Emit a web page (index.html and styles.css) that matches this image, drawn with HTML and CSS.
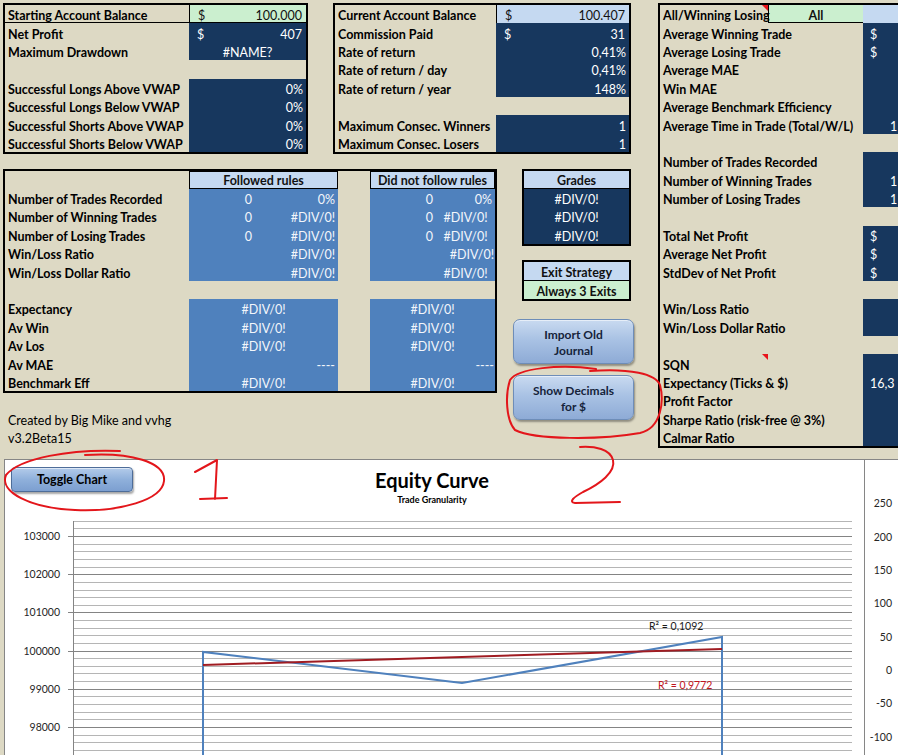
FILE: index.html
```html
<!DOCTYPE html>
<html>
<head>
<meta charset="utf-8">
<title>Trading Journal Dashboard</title>
<link rel="stylesheet" href="styles.css">
</head>
<body>
<div class="page">
  <div class="sheet">
    <section class="box summary">
      <div class="c lbl first">Starting Account Balance</div>
      <div class="c gr money first edge"><span>$</span><span>100.000</span></div>
      <div class="c lbl">Net Profit</div>
      <div class="c dk money"><span>$</span><span>407</span></div>
      <div class="c lbl">Maximum Drawdown</div>
      <div class="c dk ctr">#NAME?</div>
      <div class="c full"></div>
      <div class="c lbl">Successful Longs Above VWAP</div>
      <div class="c dk r">0%</div>
      <div class="c lbl">Successful Longs Below VWAP</div>
      <div class="c dk r">0%</div>
      <div class="c lbl">Successful Shorts Above VWAP</div>
      <div class="c dk r">0%</div>
      <div class="c lbl">Successful Shorts Below VWAP</div>
      <div class="c dk r">0%</div>
    </section>

    <section class="box account">
      <div class="c lbl">Current Account Balance</div>
      <div class="c lt money edge"><span>$</span><span>100.407</span></div>
      <div class="c lbl">Commission Paid</div>
      <div class="c dk money"><span>$</span><span>31</span></div>
      <div class="c lbl">Rate of return</div>
      <div class="c dk r">0,41%</div>
      <div class="c lbl">Rate of return / day</div>
      <div class="c dk r">0,41%</div>
      <div class="c lbl">Rate of return / year</div>
      <div class="c dk r">148%</div>
      <div class="c full"></div>
      <div class="c lbl">Maximum Consec. Winners</div>
      <div class="c dk r">1</div>
      <div class="c lbl">Maximum Consec. Losers</div>
      <div class="c dk r">1</div>
    </section>

    <section class="box stats">
      <div class="c lbl note">All/Winning Losing</div>
      <div class="c gr lbl ctr sel">All</div>
      <div class="c lt"></div>
      <div class="c lbl span2">Average Winning Trade</div>
      <div class="c dk sv">$</div>
      <div class="c lbl span2">Average Losing Trade</div>
      <div class="c dk sv">$</div>
      <div class="c lbl span2">Average MAE</div>
      <div class="c dk"></div>
      <div class="c lbl span2">Win MAE</div>
      <div class="c dk"></div>
      <div class="c lbl span2">Average Benchmark Efficiency</div>
      <div class="c dk"></div>
      <div class="c lbl span2">Average Time in Trade (Total/W/L)</div>
      <div class="c dk near">1</div>
      <div class="c full"></div>
      <div class="c lbl span2">Number of Trades Recorded</div>
      <div class="c dk"></div>
      <div class="c lbl span2">Number of Winning Trades</div>
      <div class="c dk near">1</div>
      <div class="c lbl span2">Number of Losing Trades</div>
      <div class="c dk near">1</div>
      <div class="c full"></div>
      <div class="c lbl span2">Total Net Profit</div>
      <div class="c dk sv">$</div>
      <div class="c lbl span2">Average Net Profit</div>
      <div class="c dk sv">$</div>
      <div class="c lbl span2">StdDev of Net Profit</div>
      <div class="c dk sv">$</div>
      <div class="c full"></div>
      <div class="c lbl span2">Win/Loss Ratio</div>
      <div class="c dk"></div>
      <div class="c lbl span2">Win/Loss Dollar Ratio</div>
      <div class="c dk"></div>
      <div class="c full"></div>
      <div class="c lbl note">SQN</div>
      <div class="c"></div>
      <div class="c dk"></div>
      <div class="c lbl span2">Expectancy (Ticks &amp; $)</div>
      <div class="c dk sv">16,3</div>
      <div class="c lbl span2">Profit Factor</div>
      <div class="c dk"></div>
      <div class="c lbl span2">Sharpe Ratio (risk-free @ 3%)</div>
      <div class="c dk"></div>
      <div class="c lbl span2">Calmar Ratio</div>
      <div class="c dk"></div>
    </section>

    <section class="box rules">
      <div class="c"></div>
      <div class="c lt lbl ctr span2 head">Followed rules</div>
      <div class="c"></div>
      <div class="c lt lbl ctr span2 head">Did not follow rules</div>

      <div class="c lbl">Number of Trades Recorded</div>
      <div class="c md r">0</div><div class="c md r">0%</div>
      <div class="c"></div>
      <div class="c md r">0</div><div class="c md r">0%</div>

      <div class="c lbl">Number of Winning Trades</div>
      <div class="c md r">0</div><div class="c md r">#DIV/0!</div>
      <div class="c"></div>
      <div class="c md r">0</div><div class="c md ctr">#DIV/0!</div>

      <div class="c lbl">Number of Losing Trades</div>
      <div class="c md r">0</div><div class="c md r">#DIV/0!</div>
      <div class="c"></div>
      <div class="c md r">0</div><div class="c md ctr">#DIV/0!</div>

      <div class="c lbl">Win/Loss Ratio</div>
      <div class="c md"></div><div class="c md r">#DIV/0!</div>
      <div class="c"></div>
      <div class="c md"></div><div class="c md r tight">#DIV/0!</div>

      <div class="c lbl">Win/Loss Dollar Ratio</div>
      <div class="c md"></div><div class="c md r">#DIV/0!</div>
      <div class="c"></div>
      <div class="c md"></div><div class="c md ctr">#DIV/0!</div>

      <div class="c full"></div>

      <div class="c lbl">Expectancy</div>
      <div class="c md ctr span2">#DIV/0!</div>
      <div class="c"></div>
      <div class="c md ctr span2">#DIV/0!</div>

      <div class="c lbl">Av Win</div>
      <div class="c md ctr span2">#DIV/0!</div>
      <div class="c"></div>
      <div class="c md ctr span2">#DIV/0!</div>

      <div class="c lbl">Av Los</div>
      <div class="c md ctr span2">#DIV/0!</div>
      <div class="c"></div>
      <div class="c md ctr span2">#DIV/0!</div>

      <div class="c lbl">Av MAE</div>
      <div class="c md r span2">----</div>
      <div class="c"></div>
      <div class="c md r span2 tight">----</div>

      <div class="c lbl">Benchmark Eff</div>
      <div class="c md ctr span2">#DIV/0!</div>
      <div class="c"></div>
      <div class="c md ctr span2">#DIV/0!</div>
    </section>

    <section class="box grades">
      <div class="c lt lbl ctr hd">Grades</div>
      <div class="c dk ctr">#DIV/0!</div>
      <div class="c dk ctr">#DIV/0!</div>
      <div class="c dk ctr">#DIV/0!</div>
    </section>

    <section class="box exit">
      <div class="c lt lbl ctr hd">Exit Strategy</div>
      <div class="c gr lbl ctr">Always 3 Exits</div>
    </section>

    <div class="actions">
      <button class="xl-btn big">Import Old<br>Journal</button>
      <button class="xl-btn big">Show Decimals<br>for $</button>
    </div>

    <div class="credits">
      <div class="c">Created by Big Mike and vvhg</div>
      <div class="c">v3.2Beta15</div>
    </div>
  </div>

  <div class="charts">
    <div class="chart-main">
      <button class="xl-btn toggle">Toggle Chart</button>
      <svg class="plot" width="859" height="295" viewBox="0 0 859 295">
        <text class="title" x="427" y="28" text-anchor="middle">Equity Curve</text>
        <text class="subtitle" x="427" y="43" text-anchor="middle">Trade Granularity</text>
        <g class="minor">
          <line x1="68" x2="847" y1="61.5" y2="61.5"/>
          <line x1="68" x2="847" y1="68.5" y2="68.5"/>
          <line x1="68" x2="847" y1="84.5" y2="84.5"/>
          <line x1="68" x2="847" y1="91.5" y2="91.5"/>
          <line x1="68" x2="847" y1="99.5" y2="99.5"/>
          <line x1="68" x2="847" y1="107.5" y2="107.5"/>
          <line x1="68" x2="847" y1="122.5" y2="122.5"/>
          <line x1="68" x2="847" y1="130.5" y2="130.5"/>
          <line x1="68" x2="847" y1="137.5" y2="137.5"/>
          <line x1="68" x2="847" y1="145.5" y2="145.5"/>
          <line x1="68" x2="847" y1="160.5" y2="160.5"/>
          <line x1="68" x2="847" y1="168.5" y2="168.5"/>
          <line x1="68" x2="847" y1="175.5" y2="175.5"/>
          <line x1="68" x2="847" y1="183.5" y2="183.5"/>
          <line x1="68" x2="847" y1="198.5" y2="198.5"/>
          <line x1="68" x2="847" y1="206.5" y2="206.5"/>
          <line x1="68" x2="847" y1="213.5" y2="213.5"/>
          <line x1="68" x2="847" y1="221.5" y2="221.5"/>
          <line x1="68" x2="847" y1="236.5" y2="236.5"/>
          <line x1="68" x2="847" y1="244.5" y2="244.5"/>
          <line x1="68" x2="847" y1="252.5" y2="252.5"/>
          <line x1="68" x2="847" y1="259.5" y2="259.5"/>
          <line x1="68" x2="847" y1="275.5" y2="275.5"/>
          <line x1="68" x2="847" y1="282.5" y2="282.5"/>
          <line x1="68" x2="847" y1="290.5" y2="290.5"/>
        </g>
        <g class="major">
          <line x1="63" x2="847" y1="76.5" y2="76.5"/>
          <line x1="63" x2="847" y1="114.5" y2="114.5"/>
          <line x1="63" x2="847" y1="152.5" y2="152.5"/>
          <line x1="63" x2="847" y1="191.5" y2="191.5"/>
          <line x1="63" x2="847" y1="229.5" y2="229.5"/>
          <line x1="63" x2="847" y1="267.5" y2="267.5"/>
          <line x1="68.5" x2="68.5" y1="61" y2="295"/>
        </g>
        <g class="ylab">
          <text x="55" y="80">103000</text>
          <text x="55" y="118">102000</text>
          <text x="55" y="156">101000</text>
          <text x="55" y="195">100000</text>
          <text x="55" y="233">99000</text>
          <text x="55" y="271">98000</text>
        </g>
        <polyline class="equity" points="198,300 198,192 457,223 717,177 717,300"/>
        <line class="trend" x1="198" y1="205" x2="717" y2="189"/>
        <text class="r2" x="644" y="170">R² = 0,1092</text>
        <text class="r2 red" x="653" y="229">R² = 0,9772</text>
      </svg>
    </div>
    <div class="chart-side">
      <svg width="60" height="295" viewBox="0 0 60 295">
        <g class="ylab side">
          <text x="27" y="47">250</text>
          <text x="27" y="80.5">200</text>
          <text x="27" y="114">150</text>
          <text x="27" y="147">100</text>
          <text x="27" y="181">50</text>
          <text x="27" y="214">0</text>
          <text x="27" y="247">-50</text>
          <text x="27" y="281">-100</text>
        </g>
      </svg>
    </div>
  </div>

  <svg class="marks" width="898" height="755" viewBox="0 0 898 755">
    <path d="M120 451 C70 449 20 458 6 475 C-1 492 30 508 75 510 C120 512 162 500 164 481 C166 462 130 452 85 455"/>
    <path d="M195 472 L217 460 L215 499 M200 499 L227 498"/>
    <path d="M596 369 C560 364 518 368 510 380 C505 395 506 420 515 430 C535 440 600 440 640 433 C662 428 664 400 660 385 C656 374 630 368 590 371"/>
    <path d="M580 447 C595 446 610 449 613 460 C616 472 600 484 583 492 C574 497 568 502 575 503 L620 502"/>
  </svg>
</div>
</body>
</html>
```

FILE: styles.css
```css
* { box-sizing: border-box; }

body {
  margin: 0;
  width: 898px;
  height: 755px;
  overflow: hidden;
  background: #ddd9c4;
  font-family: Lato, "DejaVu Sans", sans-serif;
  font-size: 12.5px;
  color: #000;
}

.page {
  position: relative;
  width: 898px;
  height: 755px;
  overflow: hidden;
}

/* ---------- sheet grid ---------- */
.sheet {
  display: grid;
  grid-template-columns: 5px 301px 29px 160px 29px 105px 31px 300px;
  grid-template-rows: repeat(24, 18.4px);
  padding-top: 5px;
  width: 960px;
}

.box {
  outline: 2px solid #000;
  display: grid;
  grid-auto-rows: 18.4px;
}

.summary { grid-column: 2; grid-row: 1 / 9; grid-template-columns: 184px 117px; }
.account { grid-column: 4 / 7; grid-row: 1 / 9; grid-template-columns: 161px 133px; }
.stats   { grid-column: 8; grid-row: 1 / 25; grid-template-columns: 108px 95px 97px; }
.rules   { grid-column: 2 / 5; grid-row: 10 / 22; grid-template-columns: 184px 66px 83px 32px 66px 59px; }
.grades  { grid-column: 6; grid-row: 10 / 14; grid-template-columns: 1fr; }
.exit    { grid-column: 6; grid-row: 15 / 17; grid-template-columns: 1fr; }

.actions {
  grid-column: 5 / 8;
  grid-row: 18 / 25;
  display: flex;
  flex-direction: column;
  gap: 11px;
  padding: 1px 0 0 18px;
}

.credits {
  grid-column: 2;
  grid-row: 23 / 25;
  display: grid;
  grid-auto-rows: 18.4px;
}

/* ---------- cells ---------- */
.c {
  display: flex;
  align-items: center;
  padding: 3px 3px 0;
  white-space: nowrap;
  overflow: hidden;
  min-width: 0;
}
.lbl { font-weight: 700; }
.full { grid-column: 1 / -1; }
.span2 { grid-column: span 2; }
.r { justify-content: flex-end; }
.ctr { justify-content: center; }
.money { justify-content: space-between; padding: 3px 4px 0 8px; }
.tight { padding-right: 1px; }

.dk { background: #17375e; color: #fff; }
.md { background: #4f81bd; color: #f3f6fb; }
.lt { background: #c5d9f1; color: #111; }
.gr { background: #cbefcf; color: #111; }

.first { border-bottom: 1px solid #000; }
.edge { border-left: 1px solid #000; }
.sel { border-left: 1px solid #000; border-bottom: 1px solid #000; }
.head { border: 1px solid #000; padding-top: 2px; }
.hd { border-bottom: 1px solid #000; padding-top: 2px; }

.sv { padding-left: 7px; }
.near { padding-left: 27px; }

.note { position: relative; overflow: visible; }
.note::after {
  content: "";
  position: absolute;
  top: 0;
  right: 0;
  border-top: 6px solid #e8141b;
  border-left: 6px solid transparent;
}

/* ---------- buttons ---------- */
.xl-btn {
  font-family: Lato, "DejaVu Sans", sans-serif;
  font-weight: 700;
  color: #15233a;
  border: 1px solid #6e8db8;
  background: linear-gradient(#c9daf0, #a9c2e4 45%, #8eabd6);
  box-shadow: 1px 2px 2px rgba(0, 0, 0, 0.35), inset 0 1px 0 rgba(255, 255, 255, 0.55);
  cursor: pointer;
}
.big {
  flex: none;
  width: 121px;
  height: 45px;
  border-radius: 7px;
  font-size: 12px;
  line-height: 16px;
  padding: 3px 0 0;
}
.toggle {
  position: absolute;
  left: 6px;
  top: 7px;
  width: 122px;
  height: 25px;
  padding: 1px 0 0;
  border-radius: 4px;
  font-size: 12.5px;
  color: #000;
  border-color: #4e6d99;
  background: linear-gradient(#b3cbea, #8fb0db 50%, #7c9fd0);
}

/* ---------- charts ---------- */
.charts {
  display: flex;
  margin: 12.4px 0 0 4px;
  height: 296px;
}
.chart-main {
  position: relative;
  width: 861px;
  flex: none;
  background: #fff;
  border-top: 1px solid #868686;
  border-left: 1px solid #868686;
  border-right: 1px solid #868686;
}
.chart-side {
  flex: 1;
  background: #fff;
  border-top: 1px solid #868686;
}
.plot, .chart-side svg { display: block; }

.title { font-family: Lato, sans-serif; font-weight: 700; font-size: 20px; fill: #000; }
.subtitle { font-family: Lato, sans-serif; font-weight: 700; font-size: 9px; fill: #000; }
.minor line { stroke: #b5b5b5; stroke-width: 1; }
.major line { stroke: #848484; stroke-width: 1; }
.ylab text { font-family: Lato, sans-serif; font-size: 10.5px; fill: #262626; text-anchor: end; }
.equity { fill: none; stroke: #4f81bd; stroke-width: 2; }
.trend { stroke: #a01c22; stroke-width: 2; }
.r2 { font-family: Lato, sans-serif; font-size: 10.5px; fill: #1a1a1a; }
.r2.red { fill: #c0141c; }

/* ---------- hand-drawn annotations ---------- */
.marks {
  position: absolute;
  left: 0;
  top: 0;
  pointer-events: none;
}
.marks path {
  fill: none;
  stroke: #e3161b;
  stroke-width: 2;
  stroke-linecap: round;
  stroke-linejoin: round;
}
```
